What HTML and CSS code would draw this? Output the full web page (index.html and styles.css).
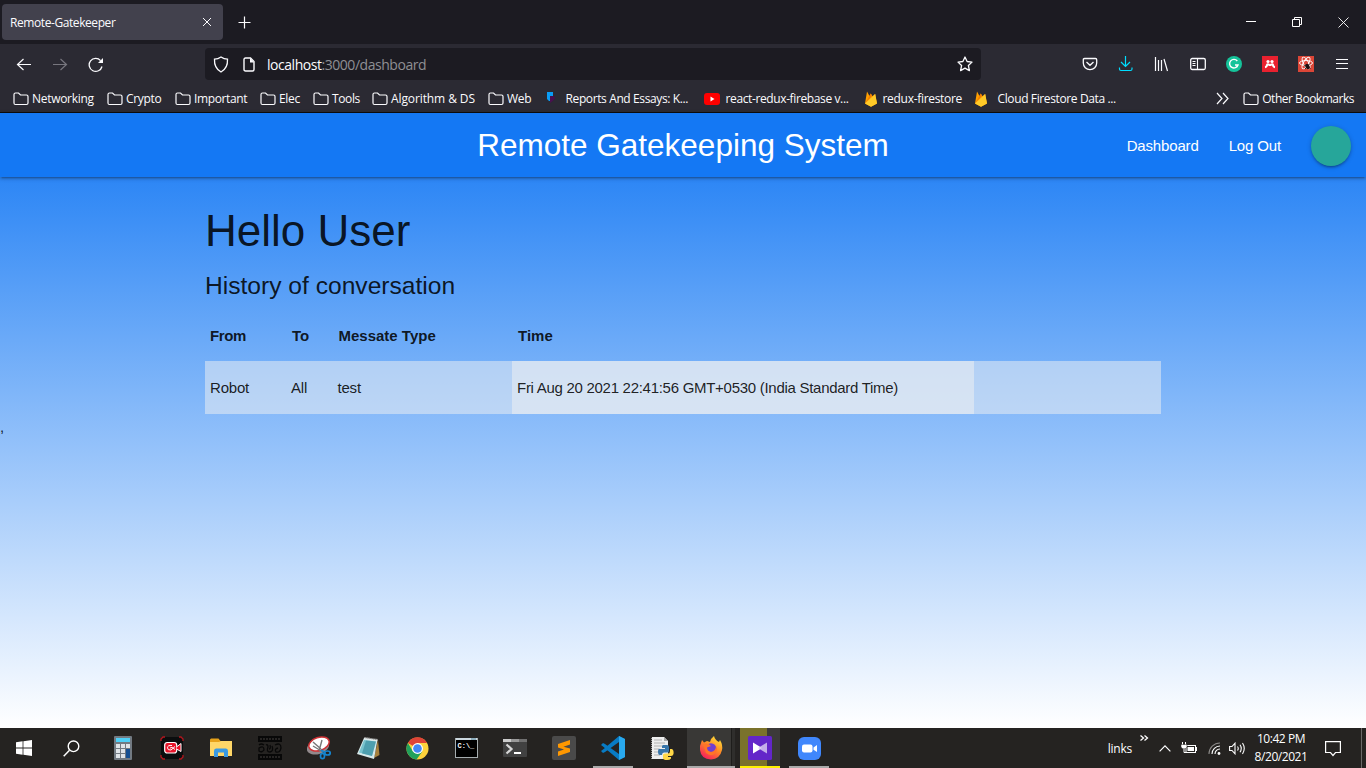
FILE: index.html
```html
<!DOCTYPE html>
<html lang="en">
<head>
<meta charset="utf-8">
<title>Remote-Gatekeeper</title>
<link rel="stylesheet" href="styles.css">
</head>
<body>
<svg class="defs" width="0" height="0">
  <defs>
    <symbol id="folder" viewBox="0 0 16 14"><path d="M1 11V2.500Q1 1 2.500 1H5.500L7.500 3H13.500Q15 3 15 4.500V11Q15 12.500 13.500 12.500H2.500Q1 12.500 1 11Z" fill="none" stroke="#fbfbfe" stroke-width="1.200"/></symbol>
    <symbol id="flame" viewBox="0 0 14 16"><path d="M1 12.500 3 .6 5.500 5 6.800 2.500 8.500 5.200 11 3 13 12.500 7 15.800Z" fill="#ffa000"/><path d="M1 12.500 6.800 2.500 8 5Z" fill="#f57c00"/><path d="M1 12.500 11.300 3 13 12.500 7 15.800Z" fill="#ffca28"/></symbol>
  </defs>
</svg>
<div class="screen">
  <header class="tabs">
    <div class="tab"><span class="t-tab">Remote-Gatekeeper</span>
      <svg width="10" height="10"><path d="M1 1 9 9M9 1 1 9" stroke="#fbfbfe" stroke-width="1"/></svg></div>
    <svg class="plus" width="13" height="13"><path d="M6.500 .5V12.500M.5 6.500H12.500" stroke="#fbfbfe" stroke-width="1.200"/></svg>
    <div class="winbtns">
      <svg width="11" height="11"><path d="M0 4.500H10" stroke="#fff"/></svg>
      <svg width="11" height="11"><path d="M.5 2.500H7.500V9.500H.5ZM2.500 2.500V.5H9.500V7.500H7.500" fill="none" stroke="#fff"/></svg>
      <svg width="11" height="11"><path d="M.5 .5 10.500 10.500M10.500 .5 .5 10.500" stroke="#fff" stroke-width=".9"/></svg>
    </div>
  </header>

  <div class="toolbar">
    <div class="navbtns">
      <svg width="16" height="16"><path d="M15 7.500H2M7.500 2 1.500 7.500 7.500 13" fill="none" stroke="#fbfbfe" stroke-width="1.200"/></svg>
      <svg width="16" height="16"><path d="M1 7.500H14M8.500 2 14.500 7.500 8.500 13" fill="none" stroke="#77767e" stroke-width="1.200"/></svg>
      <svg width="16" height="16"><path d="M14 9.500A6.500 6.500 0 1 1 12.600 3.600" fill="none" stroke="#fbfbfe" stroke-width="1.300"/><path d="M15 1V6H10Z" fill="#fbfbfe"/></svg>
    </div>
    <div class="urlbar">
      <svg width="16" height="17"><path d="M8 1Q5 3.200 1.500 3.200Q1 12 8 16Q15 12 14.500 3.200Q11 3.200 8 1Z" fill="none" stroke="#fbfbfe" stroke-width="1.300"/></svg>
      <svg class="page-ico" width="12" height="15"><path d="M1 2.500Q1 1 2.500 1H7.500L11 4.500V12.500Q11 14 9.500 14H2.500Q1 14 1 12.500Z" fill="none" stroke="#fbfbfe" stroke-width="1.400"/><path d="M7 1V5.500H11Z" fill="#fbfbfe"/></svg>
      <span class="url"><b>localhost</b>:3000/dashboard</span>
      <svg class="star" width="16" height="16"><path d="M8 1 10.100 5.500 15 6.100 11.400 9.500 12.400 14.600 8 12.100 3.600 14.600 4.600 9.500 1 6.100 5.900 5.500Z" fill="none" stroke="#fbfbfe" stroke-width="1.300" stroke-linejoin="round"/></svg>
    </div>
    <div class="tools">
      <svg width="16" height="16"><path d="M2.500 2.500H13.500Q14.700 2.500 14.700 3.700V7A6.700 6.700 0 0 1 1.300 7V3.700Q1.300 2.500 2.500 2.500ZM4.500 6 8 9.300 11.500 6" fill="none" stroke="#fbfbfe" stroke-width="1.300"/></svg>
      <svg width="16" height="16"><path d="M7.500 0V10.500M3 6 7.500 10.500 12 6M1.500 11.500V13Q1.500 14.500 3 14.500H12.500Q14 14.500 14 13V11.500" fill="none" stroke="#00ddff" stroke-width="1.200"/></svg>
      <svg width="16" height="16"><path d="M1.500 1V15M4.500 4V15M7.500 4V15M10 3 13.500 15" fill="none" stroke="#fbfbfe" stroke-width="1.200"/></svg>
      <svg width="16" height="16"><rect x=".7" y="2.500" width="14.600" height="11" rx="1.500" fill="none" stroke="#fbfbfe" stroke-width="1.300"/><path d="M7.500 3V13M2.500 5.500H5.500M2.500 7.500H5.500M2.500 9.500H5.500" stroke="#fbfbfe" stroke-width="1.100"/></svg>
      <svg width="16" height="16"><circle cx="8" cy="8" r="8" fill="#15c39a"/><path d="M11.300 5A4.300 4.300 0 1 0 12 9H9" fill="none" stroke="#fff" stroke-width="1.400"/></svg>
      <svg width="16" height="16"><path fill="#e9212f" d="M0 0H16V16H0Z"/><path d="M3 11.200Q5 11 5 8.500M8 8.300V10M13 11.200Q11 11 11 8.500" fill="none" stroke="#fff" stroke-width="2"/><path d="M4 8.500Q5 6.500 8 8 11 6.500 12 8.500L10 10 8 8.500 6 10Z" fill="#fff"/><circle cx="6" cy="5.500" r="1.600" fill="#fff"/><circle cx="10" cy="5.500" r="1.600" fill="#fff"/></svg>
      <svg width="16" height="16"><path fill="#dc4637" d="M0 0H16V16H0Z"/><g fill="none" stroke="#fff" stroke-width=".9"><ellipse cx="8" cy="7" rx="6.500" ry="2.500"/><ellipse cx="8" cy="7" rx="6.500" ry="2.500" transform="rotate(60 8 7)"/><ellipse cx="8" cy="7" rx="6.500" ry="2.500" transform="rotate(120 8 7)"/></g><ellipse cx="9.500" cy="10.500" rx="2" ry="2.800" fill="#1c1110" transform="rotate(-25 9.500 10.500)"/><path d="M6 9 12.500 12.500M12 7.500 7 13" stroke="#1c1110" stroke-width=".9"/></svg>
      <svg width="16" height="16"><path d="M2 3.500H14M2 7.500H14M2 12.500H14" stroke="#fbfbfe" stroke-width="1.200"/></svg>
    </div>
  </div>

  <div class="bookmarks">
    <div class="bm w94"><svg width="16" height="14"><use href="#folder"/></svg><span>Networking</span></div>
    <div class="bm w68"><svg width="16" height="14"><use href="#folder"/></svg><span>Crypto</span></div>
    <div class="bm w85"><svg width="16" height="14"><use href="#folder"/></svg><span class="tight">Important</span></div>
    <div class="bm w53"><svg width="16" height="14"><use href="#folder"/></svg><span>Elec</span></div>
    <div class="bm w59"><svg width="16" height="14"><use href="#folder"/></svg><span class="tight">Tools</span></div>
    <div class="bm w116"><svg width="16" height="14"><use href="#folder"/></svg><span class="loose">Algorithm &amp; DS</span></div>
    <div class="bm w56"><svg width="16" height="14"><use href="#folder"/></svg><span>Web</span></div>
    <div class="bm w160 gap6"><svg width="16" height="16"><path d="M3 1H9V5H6V10H5L3 8Z" fill="#0a9cf5"/><path d="M6 5H9Q11 5 11 7.500 9 10 6 12Z" fill="#49104f"/></svg><span class="tight">Reports And Essays: K...</span></div>
    <div class="bm w160 gap6"><svg width="16" height="14"><rect y="1" width="16" height="12" rx="3" fill="#f00"/><path d="M6.500 4.500V9.500L10.500 7Z" fill="#fff"/></svg><span class="tight">react-redux-firebase v...</span></div>
    <div class="bm w110 gap5"><svg width="14" height="16"><use href="#flame"/></svg><span>redux-firestore</span></div>
    <div class="bm gap10"><svg width="14" height="16"><use href="#flame"/></svg><span class="tight">Cloud Firestore Data ...</span></div>
    <div class="bm other"><svg class="more" width="13" height="13"><path d="M1 1 6 6.500 1 12M7 1 12 6.500 7 12" fill="none" stroke="#fbfbfe" stroke-width="1.200"/></svg><svg width="16" height="14"><use href="#folder"/></svg><span class="snug">Other Bookmarks</span></div>
  </div>

  <main class="page">
    <nav class="nav">
      <div class="side"></div>
      <div class="brand">Remote Gatekeeping System</div>
      <div class="links"><a>Dashboard</a><a>Log Out</a><span class="avatar"></span></div>
    </nav>
    <section class="container">
      <h3>Hello User</h3>
      <h5>History of conversation</h5>
      <div class="row head"><span class="from">From</span><span>To</span><span>Messate Type</span><span>Time</span></div>
      <div class="row data"><span>Robot</span><span>All</span><span>test</span><span class="time">Fri Aug 20 2021 22:41:56 GMT+0530 (India Standard Time)</span></div>
    </section>
    <span class="comma">,</span>
  </main>

  <footer class="taskbar">
    <div class="slot start"><svg width="16" height="16"><path d="M0 2.300 6.600 1.300V7.500H0ZM7.400 1.200 16 0V7.500H7.400ZM0 8.400H6.600V14.700L0 13.700ZM7.400 8.400H16V16L7.400 14.800Z" fill="#fff"/></svg></div>
    <div class="slot search"><svg width="17" height="17"><circle cx="10.500" cy="6.300" r="5.300" fill="none" stroke="#fff" stroke-width="1.400"/><path d="M6.500 10.300.7 16.200" stroke="#fff" stroke-width="1.500"/></svg></div>
    <div class="slot"><svg width="18" height="24"><rect width="18" height="24" rx="1" fill="#727a82"/><rect x="2" y="2" width="14" height="4" fill="#4fd0f7"/><path d="M2 8H6V12H2ZM7 8H11V12H7ZM12 8H16V12H12ZM2 13H6V17H2ZM7 13H11V17H7ZM2 18H6V22H2ZM7 18H11V22H7Z" fill="#dfe4e8"/><path d="M12 13H16V22H12Z" fill="#164f91"/></svg></div>
    <div class="slot"><svg width="24" height="24"><rect x="1" y="1" width="22" height="22" rx="3" fill="#0b0d0e"/><path d="M1 5V3L3 1H5M19 1H21L23 3V5M1 19V21L3 23H5M19 23H21L23 21V19" fill="none" stroke="#b4161e" stroke-width="1.300"/><rect x="4.700" y="6.500" width="12" height="10.500" rx="2.500" fill="#e8152b" stroke="#fff" stroke-width="1.200"/><path d="M16.500 11 21 7.500V15.500L16.500 13" fill="#e8152b" stroke="#fff"/><path d="M12 9.500Q7.500 9 7.500 11.800 7.500 14.500 11 14L15 10.500M10 12Q12 10 15 13.500" fill="none" stroke="#fff" stroke-width="1"/></svg></div>
    <div class="slot"><svg width="22" height="20"><path d="M0 1.500 1 .5H8.500L10.500 3H21V18H0Z" fill="#e7a21a"/><path d="M0 4H9L11 3H22V18H0Z" fill="#ffd768"/><path d="M4 19V13Q4 10.500 6 10.500H16Q18 10.500 18 13V19H14V14.500H8V19Z" fill="#3a9ae2"/></svg></div>
    <div class="slot"><svg width="24" height="24"><path d="M0 0H24V6H0ZM0 18H24V24H0Z" fill="#080808"/><path d="M2 3H22M2 21H22" stroke="#302e2d" stroke-width="1.500" stroke-dasharray="2 1"/><g fill="none" stroke="#080808" stroke-width="1.300"><path d="M1 9Q3 7 6 9M1 12Q6 9 6 14 4 17 1 15ZM8 9Q10 8 10 11 8 16 12 16 16 15 14 10M12 9Q13 13 11 13M17 9Q23 6 23 12 22 17 18 16 16 13 20 12"/></g></svg></div>
    <div class="slot"><svg width="24" height="24"><ellipse cx="11" cy="11" rx="11.500" ry="7" transform="rotate(-18 11 11)" fill="#92898c"/><ellipse cx="12" cy="8" rx="10.500" ry="6.500" transform="rotate(-18 12 8)" fill="#fff" stroke="#cf3235" stroke-width="1.500"/><path d="M6 10 16 16M15 4 12 15M6 6 14 13" stroke="#777" stroke-width="1.400"/><g fill="none" stroke="#1684ce" stroke-width="1.700"><ellipse cx="15.500" cy="20" rx="2" ry="2.700"/><ellipse cx="20.500" cy="17" rx="2.700" ry="2"/><path d="M14 14 18 16.500"/></g></svg></div>
    <div class="slot"><svg width="23" height="23"><path d="M21 3 22.500 18 17 21Z" fill="#a6803d"/><path d="M7 1 20.500 3 17 22 0 17Z" fill="#d7e9ea"/><path d="M7 3 19 4.500 15 19 2 15.500Z" fill="#78c2cd"/><path d="M9 3.500 19 4.500 15 19 5 16.500Z" fill="#2c8498" opacity=".55"/><path d="M7.500 1 20.500 3" stroke="#eee" stroke-width="2" stroke-dasharray="1 1"/></svg></div>
    <div class="slot"><svg width="23" height="23" viewBox="0 0 24 24"><circle cx="12" cy="12" r="11.500" fill="#fdd23b"/><path d="M12 12 2 6.200A11.500 11.500 0 0 1 22 6.200H12Z" fill="#df4337"/><path d="M2 6.200A11.500 11.500 0 0 0 11 23.500L17 15 12 12 7 14.500Z" fill="#21a15c"/><circle cx="12" cy="12" r="5.700" fill="#fff"/><circle cx="12" cy="12" r="4.500" fill="#4287f5"/></svg></div>
    <div class="slot"><svg width="23" height="20"><rect x=".5" y=".5" width="22" height="19" fill="#000" stroke="#a6adaf"/><path d="M1 1H22" stroke="#ccd8df" stroke-width="2"/><path d="M16 1H21" stroke="#4f8198"/><text x="2.500" y="9.500" class="cmd">C:\_</text></svg></div>
    <div class="slot"><svg width="24" height="18"><rect width="24" height="18" rx="1" fill="#414141"/><path d="M0 0H8V3H0Z" fill="#ccc"/><path d="M8 0H16V3H8Z" fill="#999"/><path d="M16 0H24V3H16Z" fill="#707070"/><path d="M3.500 5.500 8.500 10 3.500 14.500" fill="none" stroke="#d7d7d7" stroke-width="2.200"/><path d="M11 14H18" stroke="#fff" stroke-width="2"/></svg></div>
    <div class="slot"><svg width="24" height="24"><rect width="24" height="24" rx="2" fill="#4a4a4a"/><path d="M6 8 18 4V8.500L11.500 10.700 18 12.500V16L6 20V15.500L12 13.500 6 11.500Z" fill="#ff9800"/></svg></div>
    <div class="slot run"><svg width="24" height="24"><path d="M18 0 24 3V21L18 24 2 10.500 0 9 2 7 4 8 18 18V6L4 16 2 17 0 15 2 13.500Z" fill="#087bc4"/><path d="M18 0 24 3V21L18 24Z" fill="#29a9ee"/></svg></div>
    <div class="slot"><svg width="24" height="24"><path d="M2 1H14L18 5V23H2Z" fill="#eee"/><path d="M14 1V5H18" fill="#aaa"/><path d="M4 4H12M4 7H15M4 10H14M4 13H9M4 16H9M4 19H10" stroke="#aaa" stroke-width=".9"/><path d="M1.500 2V23" stroke="#999" stroke-dasharray="1 1"/><path d="M13 9H17Q19 9 19 11V15Q19 16.500 17 16.500H14Q12 16.500 12 19H10Q8 19 8 15.500T10 13H15V12H12V10Z" fill="#3775a9"/><path d="M20 13H22Q24 14 23.500 18 23 20 21 20H18V21H21V22.500Q20 24 17 24 13 24 13 22V19Q13 17.500 15 17.500H18Q20 17.500 20 15Z" fill="#ffd747"/></svg></div>
    <div class="slot fire"><svg width="24" height="24"><defs><linearGradient id="ff" x1=".8" y1="0" x2=".2" y2="1"><stop offset="0" stop-color="#ffe63c"/><stop offset=".45" stop-color="#ff8b25"/><stop offset="1" stop-color="#f5155f"/></linearGradient></defs><path d="M1 10 3 4 5 6.500 8 5 11 6Q12 2 15 0 16 4 20 6L21 4Q24 9 23 14 21 23 12 23.500 2 23 1 14Z" fill="url(#ff)"/><circle cx="12" cy="12.500" r="5.300" fill="#703ed0"/><path d="M4 8Q9 6.500 12 10L8 11.500Q8 15 12 16 17 15 17 10 19 14 16 17.500 12 21 7 17Z" fill="#ff7427"/></svg></div>
    <div class="slot kmp"><svg width="24" height="24"><rect width="24" height="24" rx="1.500" fill="#6326c9"/><path d="M5 6.500V17.500L14 12Z" fill="#fff"/><path d="M19 6.500V17.500L10 12Z" fill="#d5c5ef" opacity=".85"/></svg></div>
    <div class="slot run"><svg width="23" height="23"><rect width="23" height="23" rx="6" fill="#4087fc"/><rect x="4" y="7.500" width="10.500" height="8" rx="2" fill="#fff"/><path d="M15.500 10.500 19 8V15L15.500 12.700Z" fill="#fff"/></svg></div>
    <div class="tray">
      <span class="linkstxt">links</span>
      <svg class="dbl" width="9" height="6"><path d="M.5 .5 3.500 3 .5 5.500M4.500 .5 7.500 3 4.500 5.500" fill="none" stroke="#fff" stroke-width="1.300"/></svg>
      <svg class="up" width="12" height="7"><path d="M.6 6.300 6 .9 11.400 6.300" fill="none" stroke="#fff" stroke-width="1.200"/></svg>
      <svg class="bat" width="17" height="13"><rect x="5" y="3.500" width="9.500" height="7" fill="none" stroke="#fff"/><path d="M6.500 5H13V9H6.500Z" fill="#fff"/><path d="M15.500 5V9" stroke="#fff" stroke-width="1"/><path d="M1.500 0V3M4.500 0V3" stroke="#fff"/><path d="M0 2.500H6V5Q5 7 3 7T0 5Z" fill="#fff" stroke="#252321" stroke-width=".5"/><path d="M3 7V10.500H6" fill="none" stroke="#fff"/></svg>
      <svg class="wifi" width="13" height="13"><path d="M1 12A11 11 0 0 1 12 1" fill="none" stroke="#8b8988" stroke-width="1.100"/><path d="M4 12A8 8 0 0 1 12 4M7 12A5 5 0 0 1 12 7" fill="none" stroke="#fff" stroke-width="1.100"/><circle cx="11" cy="11.500" r="1.400" fill="#fff"/></svg>
      <svg class="vol" width="17" height="13"><path d="M.6 4.500H3L6 1.200V11.800L3 8.500H.6Z" fill="none" stroke="#fff" stroke-width="1.100"/><path d="M8.500 4.500Q10 6.500 8.500 8.500M11 2.800Q13.500 6.500 11 10.200M13.500 1Q17 6.500 13.500 12" fill="none" stroke="#fff" stroke-width="1.100"/></svg>
      <div class="clock"><span>10:42 PM</span><span>8/20/2021</span></div>
      <svg class="note" width="16" height="17"><path d="M.6 1.600H15.400V12.500H10.500L8 15.500 5.500 12.500H.6Z" fill="none" stroke="#fff" stroke-width="1.200"/></svg>
    </div>
  </footer>
</div>
</body>
</html>
```
FILE: styles.css
```css
* { box-sizing: border-box; }
body { margin: 0; background: #fff; font-family: "Open Sans", "Noto Sans", sans-serif; }
svg { display: block; flex: none; }
.defs { position: absolute; }
.screen { width: 1366px; height: 768px; display: flex; flex-direction: column; overflow: hidden; }
.tabs { height: 44px; background: #1c1b22; display: flex; align-items: center; padding-left: 2px; color: #fbfbfe; font-size: 12px; }
.tab { width: 221px; height: 36px; background: #42414d; border-radius: 4px; display: flex; align-items: center; justify-content: space-between; padding: 0 11px 0 8px; }
.t-tab { letter-spacing: -.42px; }
.plus { margin-left: 15px; }
.winbtns { margin-left: auto; display: flex; gap: 35px; padding-right: 17px; }

.toolbar { height: 41px; background: #2b2a33; display: flex; align-items: center; }
.navbtns { display: flex; gap: 20px; width: 205px; padding-left: 16px; }
.urlbar { width: 776px; height: 32px; background: #1c1b22; border-radius: 4px; display: flex; align-items: center; padding: 0 8px; margin-top: -1px; }
.page-ico { margin-left: 14px; }
.url { margin-left: 12px; font-size: 14px; letter-spacing: -.46px; color: #8f8f94; white-space: nowrap; }
.url b { font-weight: 400; color: #fbfbfe; }
.star { margin-left: auto; }
.tools { margin-left: auto; display: flex; gap: 20px; padding-right: 16px; margin-top: -1px; }

.bookmarks { height: 28px; background: #2b2a33; border-bottom: 1px solid #0c0c0d; display: flex; padding-left: 12.500px; color: #fbfbfe; font-size: 12px; white-space: nowrap; letter-spacing: -.3px; }
.bm { display: flex; align-items: center; gap: 4px; flex: none; }
.bm span { margin-left: -.5px; }
.tight { letter-spacing: -.38px; }
.snug { letter-spacing: -.48px; }
.loose { letter-spacing: -.1px; }
.gap5 { gap: 5.500px; }
.gap6 { gap: 6.500px; }
.gap10 { gap: 10px; }
.w94 { width: 94px; }
.w68 { width: 68px; }
.w85 { width: 85px; }
.w53 { width: 53px; }
.w59 { width: 59px; }
.w116 { width: 116px; }
.w56 { width: 56px; }
.w160 { width: 160px; }
.w110 { width: 110.500px; }
.other { margin-left: auto; padding-right: 12px; }
.more { margin-right: 10px; }

.page { height: 615px; background: linear-gradient(#1478f4, #fff); font-family: "Liberation Sans", Arial, sans-serif; font-size: 15px; line-height: 1.5; color: rgba(0, 0, 0, .87); }
.nav { height: 64px; background: #1478f4; display: flex; align-items: center; color: #fff; box-shadow: 0 2px 2px 0 rgba(0,0,0,.14), 0 3px 1px -2px rgba(0,0,0,.12), 0 1px 5px 0 rgba(0,0,0,.2); }
.side, .links { flex: 1 1 0; }
.side { padding-left: 15px; }
.brand { font-size: 31.500px; white-space: nowrap; padding-top: 2px; }
.links { display: flex; justify-content: flex-end; align-items: center; gap: 30px; padding-right: 15px; }
.links a { padding-top: 2px; letter-spacing: -.15px; }
.avatar { width: 40px; height: 40px; border-radius: 50%; background: #26a69a; margin-top: 2px; box-shadow: 0 2px 2px 0 rgba(0,0,0,.14), 0 3px 1px -2px rgba(0,0,0,.12), 0 1px 5px 0 rgba(0,0,0,.2); }
.container { width: 956px; margin: 0 auto; padding-top: 30px; }
h3 { margin: 0; font-weight: 400; font-size: 44px; line-height: 48px; }
h5 { margin: 16.500px 0 9px; font-weight: 400; font-size: 24.600px; line-height: 27px; }
.row { display: grid; grid-template-columns: 81px 46.500px 179.500px 462px 187px; align-items: center; }
.row span { padding: 2px 5px 0; white-space: nowrap; }
.head { font-weight: 700; height: 53.500px; }
.head span { padding-top: 4px; }
.head span + span { padding-left: 6px; }
.head .from { letter-spacing: -.4px; }
.data { background: rgba(242, 242, 242, .5); height: 53px; letter-spacing: -.2px; }
.data .time { height: 100%; display: flex; align-items: center; background: rgba(242, 242, 242, .5); letter-spacing: -.28px; }
.comma { display: block; font-size: 15px; line-height: 25px; }

.taskbar { height: 40px; background: #252321; display: flex; color: #fff; }
.slot { width: 49px; height: 40px; display: flex; align-items: center; justify-content: center; flex: none; padding-right: 1px; }
.start { width: 48px; padding-right: 0; }
.search { width: 51px; padding-right: 4px; }
.run { background: linear-gradient(#aaa, #aaa) 4px 100% / 40px 2px no-repeat; }
.fire { background: linear-gradient(#aaa, #aaa) 0 100% / 48px 2px no-repeat, linear-gradient(90deg, #393836 44px, #1e1d1b 44px, #1e1d1b 45px, #2f2e2c 45px, #2f2e2c 48px, #252321 48px); }
.kmp { background: linear-gradient(#fff200, #fff200) 4px 100% / 40px 2px no-repeat, linear-gradient(90deg, transparent 4px, #7a722b 4px, #7a722b 31px, #3c3a39 31px, #3c3a39 44px, transparent 44px); }
.cmd { font: 700 7px "Liberation Mono", monospace; fill: #fff; }
.tray { margin-left: auto; display: flex; align-items: center; font-size: 12px; border-right: 1px solid #6a6968; margin-right: 4px; }
.linkstxt { letter-spacing: -.25px; }
.dbl { margin: 0 10px 20px 8px; }
.bat { margin-left: 10px; }
.wifi { margin-left: 10px; }
.vol { margin-left: 8px; }
.clock { margin-left: 8px; width: 54px; display: flex; flex-direction: column; align-items: center; line-height: 18px; letter-spacing: -.45px; white-space: nowrap; }
.note { margin: 0 20px 0 17px; }
```
